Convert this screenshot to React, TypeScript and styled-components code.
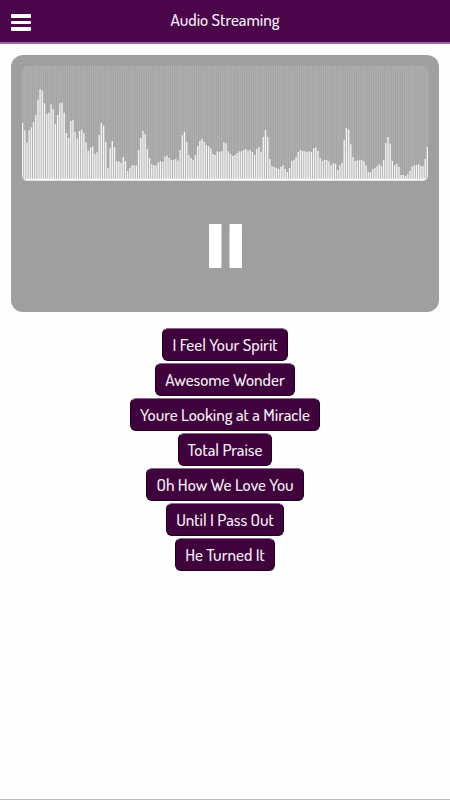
import React, { useState } from "react";
import styled, { createGlobalStyle } from "styled-components";

const GlobalStyle = createGlobalStyle`
  *, *::before, *::after { box-sizing: border-box; }
  body {
    margin: 0;
    background: #fefefe;
    font-family: Dosis, "Roboto Condensed", "Noto Sans CJK JP", sans-serif;
  }
`;

const Page = styled.div`
  display: flex;
  flex-direction: column;
  min-height: 100vh;
  border-bottom: 1px solid #bdbdbd;
`;

const Header = styled.header`
  display: grid;
  grid-template-columns: 42px 1fr 42px;
  align-items: center;
  height: 44px;
  background: #4b064b;
  border-bottom: 2px solid #9a6a9c;
`;

const Title = styled.h1`
  margin: 0;
  padding-bottom: 2px;
  text-align: center;
  font-size: 17px;
  line-height: 24px;
  font-weight: 500;
  color: #f6f1f6;
`;

const MenuButton = styled.button`
  display: flex;
  padding: 2px 0 0 11px;
  border: 0;
  background: none;
  cursor: pointer;
`;

const Player = styled.section`
  display: flex;
  flex-direction: column;
  align-items: center;
  margin: 11px 11px 0;
  padding: 11px 11px 44px;
  border-radius: 12px;
  background: #9f9f9f;
`;

const Spectrum = styled.svg`
  display: block;
  width: 100%;
  height: 115px;
  border-radius: 5px;
  border-bottom: 1px solid #e8e8e8;
`;

const PlayButton = styled.button`
  display: flex;
  margin-top: 43px;
  padding: 0;
  border: 0;
  background: none;
  cursor: pointer;
`;

const TrackList = styled.ul`
  display: flex;
  flex-direction: column;
  align-items: center;
  gap: 2px;
  margin: 16px 0 0;
  padding: 0;
  list-style: none;
`;

const TrackItem = styled.li`
  display: flex;
`;

const TrackButton = styled.button`
  height: 33px;
  padding: 0 9px;
  border: 1px solid #1e001e;
  border-top-color: #8c6a8c;
  border-radius: 6px;
  background: #3f023d;
  color: #f6f1f6;
  font-family: inherit;
  font-size: 17px;
  font-weight: 500;
  line-height: 24px;
  cursor: pointer;
`;

const tracks = [
  "I Feel Your Spirit",
  "Awesome Wonder",
  "Youre Looking at a Miracle",
  "Total Praise",
  "Oh How We Love You",
  "Until I Pass Out",
  "He Turned It",
];

/* Bar heights, out of a full scale of 342. */
const levels = [
  171, 149, 112, 149, 158, 174, 195, 241, 273, 268, 230, 198, 202, 227, 212, 168, 195, 230, 232, 202,
  141, 126, 177, 180, 144, 124, 147, 151, 141, 113, 87, 97, 101, 78, 83, 135, 171, 163, 114, 36,
  95, 117, 98, 56, 56, 51, 69, 57, 27, 36, 44, 44, 44, 90, 126, 147, 138, 93, 66, 47,
  44, 44, 53, 57, 54, 70, 73, 66, 60, 60, 63, 58, 90, 134, 144, 114, 75, 66, 60, 75,
  102, 117, 123, 114, 105, 102, 95, 78, 75, 86, 84, 86, 113, 110, 86, 78, 72, 75, 81, 86,
  86, 90, 93, 87, 90, 84, 75, 93, 99, 84, 129, 150, 129, 63, 42, 39, 36, 33, 39, 44,
  33, 24, 36, 57, 60, 69, 84, 90, 87, 86, 84, 86, 84, 95, 98, 87, 66, 57, 60, 60,
  56, 44, 51, 48, 30, 44, 51, 120, 156, 151, 107, 69, 57, 59, 59, 60, 56, 44, 24, 24,
  33, 36, 41, 48, 42, 60, 111, 129, 109, 57, 44, 48, 39, 15, 15, 12, 17, 27, 41, 44,
  45, 48, 42, 42, 63, 99,
];
const FULL = 342;
const PITCH = 20;
const BAR = 11;

const total = levels.length * PITCH - (PITCH - BAR);

function SpectrumChart() {
  return (
    <Spectrum viewBox={`0 0 ${total} ${FULL}`} preserveAspectRatio="none" role="img" aria-label="Audio spectrum">
      <rect width={total} height={FULL} fill="#a2a2a2" />
      {levels.map((level, i) => (
        <g key={i}>
          <rect x={i * PITCH} y={0} width={BAR} height={FULL} fill="#b0b0b0" />
          <rect x={i * PITCH - 4} y={FULL - level} width={PITCH} height={level} fill="#b4b4b4" />
        </g>
      ))}
      {levels.map((level, i) => (
        <rect key={i} x={i * PITCH} y={FULL - level} width={BAR} height={level} fill="#f6f6f6" />
      ))}
      <rect y={FULL - 4} width={total} height={4} fill="#ffffff" />
    </Spectrum>
  );
}

export default function App() {
  const [playing, setPlaying] = useState(true);
  return (
    <>
      <GlobalStyle />
      <Page>
        <Header>
          <MenuButton aria-label="Menu">
            <svg width="20" height="17" viewBox="0 0 20 17" fill="#ffffff">
              <rect width="20" height="4" rx="1" />
              <rect y="7" width="20" height="3" rx="1" />
              <rect y="13" width="20" height="4" rx="1" />
            </svg>
          </MenuButton>
          <Title>Audio Streaming</Title>
        </Header>
        <main>
          <Player aria-label="Player">
            <SpectrumChart />
            <PlayButton aria-label={playing ? "Pause" : "Play"} onClick={() => setPlaying(!playing)}>
              <svg width="33" height="44" viewBox="0 0 33 44" fill="#ffffff">
                {playing ? (
                  <>
                    <rect width="12.5" height="44" rx="1" />
                    <rect x="20.5" width="12.5" height="44" rx="1" />
                  </>
                ) : (
                  <path d="M0 0 33 22 0 44Z" />
                )}
              </svg>
            </PlayButton>
          </Player>
          <TrackList>
            {tracks.map((name) => (
              <TrackItem key={name}>
                <TrackButton onClick={() => setPlaying(true)}>{name}</TrackButton>
              </TrackItem>
            ))}
          </TrackList>
        </main>
      </Page>
    </>
  );
}
